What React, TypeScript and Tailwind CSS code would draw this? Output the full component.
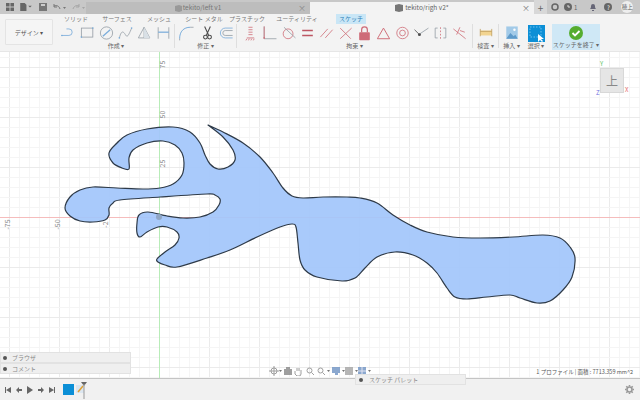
import React from "react";

const FONT = "font-['Noto_Sans_CJK_JP','Noto_Sans',sans-serif]";

// outline of the sketch profile, tip first
const PROFILE: [number, number][] = [
  [208, 125], [223, 132], [243, 143], [260, 157], [273, 173], [283, 188], [292, 196], [303, 198],
  [323, 197], [347, 197], [360, 198], [377, 203], [393, 215], [410, 225], [427, 232], [453, 237],
  [480, 238], [513, 237], [543, 235], [560, 238], [570, 247], [575, 258], [572, 277], [563, 290],
  [550, 301], [537, 303], [520, 298], [510, 295], [487, 297], [467, 299], [455, 297], [447, 288],
  [437, 273], [427, 263], [413, 255], [395, 252], [377, 257], [365, 268], [355, 278], [342, 281],
  [317, 277], [305, 270], [300, 260], [298, 243], [296, 227], [292, 224], [280, 227], [257, 237],
  [230, 250], [207, 258], [177, 267], [165, 265], [158, 262], [157, 259], [165, 252], [175, 245],
  [179, 238], [177, 232], [167, 227], [158, 227], [147, 232], [140, 237], [137, 233], [137, 223],
  [139, 215], [148, 212], [167, 216], [183, 218], [200, 217], [213, 212], [219, 205], [220, 199],
  [215, 195], [207, 194], [160, 197], [120, 200], [113, 203], [109, 208], [109, 215], [105, 220],
  [93, 222], [80, 221], [70, 216], [65, 208], [70, 197], [80, 190], [93, 187], [117, 188],
  [143, 189], [160, 188], [173, 184], [182, 175], [184, 163], [182, 153], [175, 145], [163, 141],
  [147, 143], [133, 150], [129, 158], [129, 169], [122, 168], [113, 163], [109, 153], [117, 143],
  [127, 135], [147, 129], [173, 127], [190, 132], [200, 143], [205, 155], [210, 164], [218, 169],
  [228, 167], [235, 160], [233, 150], [223, 137], [208, 125],
];

function splinePath(pts: [number, number][]) {
  let d = `M${pts[0][0]} ${pts[0][1]}`;
  for (let i = 0; i < pts.length - 1; i++) {
    const p0 = pts[Math.max(i - 1, 0)];
    const p1 = pts[i];
    const p2 = pts[i + 1];
    const p3 = pts[Math.min(i + 2, pts.length - 1)];
    const c1x = p1[0] + (p2[0] - p0[0]) / 6;
    const c1y = p1[1] + (p2[1] - p0[1]) / 6;
    const c2x = p2[0] - (p3[0] - p1[0]) / 6;
    const c2y = p2[1] - (p3[1] - p1[1]) / 6;
    d += `C${c1x} ${c1y} ${c2x} ${c2y} ${p2[0]} ${p2[1]}`;
  }
  return d + "Z";
}

function Grid() {
  const xs: number[] = [];
  const ys: number[] = [];
  for (let x = 159 % 10; x < 640; x += 10) xs.push(x);
  for (let y = 217 % 10; y < 400; y += 10) ys.push(y);
  return (
    <svg className="absolute inset-0" width="640" height="326" viewBox="0 52 640 326">
      {xs.map((x) => (
        <line key={x} x1={x + 0.5} x2={x + 0.5} y1="52" y2="378" stroke={(x - 159) % 50 === 0 ? "#ebebeb" : "#f5f5f5"} />
      ))}
      {ys.map((y) => (
        <line key={y} x1="0" x2="640" y1={y + 0.5} y2={y + 0.5} stroke={(y - 217) % 50 === 0 ? "#ebebeb" : "#f5f5f5"} />
      ))}
      <line x1="0" x2="640" y1="217.5" y2="217.5" stroke="#f5bcbc" />
      <line x1="159.5" x2="159.5" y1="52" y2="378" stroke="#b8ecb8" />
      <path d={splinePath(PROFILE)} fill="#a3c6fb" fillOpacity="0.93" stroke="#2e3a48" strokeWidth="1.2" strokeLinejoin="round" />
      <circle cx="159" cy="217" r="3" fill="#8fa6c4" />
    </svg>
  );
}

function Icon({ children, w = 19 }: { children: React.ReactNode; w?: number }) {
  return (
    <svg width={w} height="18" viewBox={`-1 -1 ${w + 2} 22`} fill="none" strokeWidth="1" className="shrink-0 opacity-80">
      {children}
    </svg>
  );
}

const B = "#5b9bd5";
const R = "#c8505c";
const G = "#808a94";

function ToolGroup({ label, children, w }: { label: string; children: React.ReactNode; w: string }) {
  return (
    <div className={`flex flex-col items-center shrink-0 ${w}`}>
      <div className="flex h-[18px] items-center">{children}</div>
      <div className="text-[6px] leading-[8px] text-[#666]">{label} ▾</div>
    </div>
  );
}

function Divider() {
  return <div className="w-px h-[24px] bg-[#dedede] shrink-0" />;
}

function Tab({ label, active, w }: { label: string; active?: boolean; w: string }) {
  return (
    <div className={`flex items-center justify-center text-[6px] leading-[10px] h-[10px] shrink-0 ${w} ${active ? "bg-[#c9e6f6] text-[#2b7fb8]" : "text-[#777]"}`}>
      {label}
    </div>
  );
}

function PanelRow({ label, className }: { label: string; className?: string }) {
  return (
    <div className={`flex items-center gap-[5px] pl-[1px] bg-[#efefef] border border-[#e2e2e2] ${className}`}>
      <span className="w-[4px] h-[4px] rounded-full bg-[#555] ml-[1px]" />
      <span className="text-[6px] text-[#888]">{label}</span>
    </div>
  );
}

export default function App() {
  return (
    <div className={`flex flex-col w-[640px] h-[400px] overflow-hidden bg-white ${FONT}`}>
      {/* Tab bar */}
      <div className="flex h-[14px] shrink-0 bg-[#c8c8c8]">
        <div className="flex items-center w-[86px] shrink-0 gap-[6px] pl-[6px] text-[#555]">
          <svg width="8" height="8" viewBox="0 0 9 9" fill="#666"><path d="M0 0h4v4H0zM5 0h4v4H5zM0 5h4v4H0zM5 5h4v4H5z" /></svg>
          <svg width="12" height="8" viewBox="0 0 13 9" fill="#666"><path d="M0 0h5l2 2v7H0zM9 3h4l-2 2z" /></svg>
          <svg width="8" height="8" viewBox="0 0 8 8" fill="#777" className="ml-px"><path d="M0 0h8v8H0z" /><path d="M2 1h4v2H2z" fill="#ccc" /></svg>
          <svg width="13" height="9" viewBox="0 0 13 9" fill="none" stroke="#777"><path d="M7 6C6 3 4 2 1 3M1 1v3h3" /><path d="M10 4h3l-1.5 2z" fill="#777" stroke="none" /></svg>
          <svg width="13" height="9" viewBox="0 0 13 9" fill="none" stroke="#a5a5a5"><path d="M1 6c1-3 3-4 6-3M7 1v3H4" /><path d="M10 4h3l-1.5 2z" fill="#a5a5a5" stroke="none" /></svg>
        </div>
        <div className="flex items-center justify-center relative w-[224px] shrink-0 mt-[2px] bg-[#bdbdbd] text-[6.5px] text-[#777]">
          <svg width="7" height="7" viewBox="0 0 7 7" className="mr-[1px]"><path d="M0 1l4-1 3 1v5l-3 1-4-1z" fill="#999" /></svg>
          tekito/left v1
          <span className="absolute right-[4px] text-[8px] text-[#888]">×</span>
        </div>
        <div className="flex items-center justify-center relative w-[224px] shrink-0 mt-[2px] bg-[#f3f3f3] text-[6.5px] text-[#666]">
          <svg width="8" height="8" viewBox="0 0 8 8" className="mr-[2px]"><path d="M0 1l4-1 4 1v6l-4 1-4-1z" fill="#777" /></svg>
          tekito/righ v2*
          <span className="absolute right-[4px] text-[8px] text-[#777]">×</span>
        </div>
        <div className="flex items-center flex-1 text-[#666]">
          <div className="flex items-center justify-center w-[13px] h-[14px] bg-[#d8d8d8] text-[10px]">+</div>
          <svg width="8" height="8" viewBox="0 0 8 8" className="ml-[4px]" fill="none" stroke="#666" strokeWidth="1.5"><circle cx="4" cy="4" r="3" /></svg>
          <svg width="8" height="8" viewBox="0 0 8 8" className="ml-[5px]"><circle cx="4" cy="4" r="4" fill="#666" /><path d="M4 2v2h2" stroke="#ddd" fill="none" /></svg>
          <span className="text-[6px] ml-[2px]">1</span>
          <svg width="8" height="8" viewBox="0 0 8 8" className="ml-[12px]"><path d="M1 6c1-1 1-2 1-3a2 2 0 014 0c0 1 0 2 1 3zM3 7h2v1H3z" fill="#667" /></svg>
          <div className="flex items-center justify-center w-[8px] h-[8px] rounded-full bg-[#666] text-[6px] text-white ml-[7px]">?</div>
          <div className="flex items-center justify-center w-[12px] h-[12px] rounded-full bg-[#eeeeee] text-[5.5px] ml-[9px]">穂上</div>
        </div>
      </div>

      {/* Toolbar */}
      <div className="flex h-[38px] shrink-0 bg-[#f3f3f3] border-b border-[#e6e6e6]">
        <div className="flex items-center justify-center w-[48px] h-[26px] ml-[5px] mt-[5px] shrink-0 bg-[#f5f5f5] border border-[#e4e4e4] rounded-[1px] text-[6px] text-[#555]">
          デザイン ▾
        </div>
        <div className="flex flex-col ml-[5px] min-w-0">
          <div className="flex h-[10px]">
            <Tab label="ソリッド" w="w-[30px] ml-[3px]" />
            <Tab label="サーフェス" w="w-[34px] ml-[9px]" />
            <Tab label="メッシュ" w="w-[30px] ml-[10px]" />
            <Tab label="シート メタル" w="w-[40px] ml-[10px]" />
            <Tab label="プラスチック" w="w-[40px] ml-[3px]" />
            <Tab label="ユーティリティ" w="w-[44px] ml-[8px]" />
            <Tab label="スケッチ" w="w-[30px] ml-[17px]" active />
          </div>
          <div className="flex items-start">
            <ToolGroup label="作成" w="w-[116px]">
              <Icon><path d="M1 13h9a4 4 0 000-8H7" stroke={B} /><circle cx="1.5" cy="13" r="1" fill={B} /></Icon>
              <Icon><rect x="2" y="4" width="14" height="11" stroke={G} /><circle cx="2" cy="15" r="1" fill={B} /><circle cx="16" cy="4" r="1" fill={B} /></Icon>
              <Icon><circle cx="9.5" cy="10" r="7.5" stroke={G} /><path d="M5 14L14 6" stroke={B} strokeWidth="1.5" /></Icon>
              <Icon><path d="M2 16c3-12 6-6 8-3s4-2 7-9" stroke={G} /><circle cx="2" cy="16" r="1" fill={B} /><circle cx="17" cy="4" r="1" fill={B} /></Icon>
              <Icon><path d="M9 3L2 16h14zM9 3v13" stroke={G} /><path d="M9 3v13h7z" fill="#d3dce4" /></Icon>
              <Icon><path d="M3 3v14M16 3v14" stroke={G} /><path d="M3 9h13" stroke={B} strokeWidth="1.5" /></Icon>
            </ToolGroup>
            <Divider />
            <ToolGroup label="修正" w="w-[61px]">
              <Icon w={22}><path d="M2 17C2 8 7 3 15 3" stroke={B} strokeWidth="1.2" /><path d="M2 17v2M15 3h4" stroke={G} /></Icon>
              <Icon><path d="M6 2l5 11M13 2L8 13" stroke="#222" strokeWidth="1.3" /><circle cx="7" cy="15" r="2.3" stroke="#222" strokeWidth="1.3" /><circle cx="12" cy="15" r="2.3" stroke="#222" strokeWidth="1.3" /></Icon>
              <Icon><path d="M17 4H8a5.5 5.5 0 000 12h9" stroke={B} /><path d="M17 7H8a2.5 2.5 0 000 6h9" stroke={G} /></Icon>
            </ToolGroup>
            <Divider />
            <ToolGroup label="拘束" w="w-[235px]">
              <Icon><path d="M7 3h5M7 6h5M7 9h5M7 12h5M5 16h9" stroke={R} /><path d="M5 17l-1 2M8 17l-1 2M11 17l-1 2M14 17l-1 2" stroke={R} /></Icon>
              <Icon><path d="M3 2v15h15" stroke={G} /><path d="M3 2v15" stroke={R} /><circle cx="3" cy="16" r="1" fill={R} /></Icon>
              <Icon><circle cx="9" cy="11" r="6" stroke={R} /><path d="M4 3l14 13" stroke={G} /></Icon>
              <Icon><path d="M3 7h13M3 13h13" stroke="#b03040" strokeWidth="2" /></Icon>
              <Icon><path d="M2 15L11 5M8 16L17 6" stroke={R} /></Icon>
              <Icon><path d="M3 4l13 13M17 4L3 17" stroke={R} /></Icon>
              <Icon><rect x="3" y="9" width="13" height="10" rx="1" fill="#c64a5a" /><path d="M6 9V6a3.5 3.5 0 017 0v3" stroke="#c64a5a" strokeWidth="1.5" /></Icon>
              <Icon><path d="M9.5 4L2 17h15z" stroke={R} strokeWidth="1.2" /></Icon>
              <Icon><circle cx="9.5" cy="10" r="7" stroke={R} /><circle cx="9.5" cy="10" r="3.5" stroke={R} /></Icon>
              <Icon><path d="M6 12L18 4" stroke={G} /><path d="M1 6l6 6" stroke="#222" /><circle cx="7" cy="12" r="1.8" fill="#222" /></Icon>
              <Icon><path d="M9.5 3v14" stroke={R} strokeDasharray="2 2" /><path d="M6 4H3v12h3M13 4h3v12h-3" stroke={G} /></Icon>
              <Icon><path d="M2 5l15 12M10 3l-4 9M10 7l6 2" stroke={R} /></Icon>
            </ToolGroup>
            <Divider />
            <ToolGroup label="検査" w="w-[25px]">
              <Icon w={18}>
                <rect x="2" y="7" width="14" height="6" fill="#f2cd78" />
                <path d="M2 5v9M16 5v9M2 8h14" stroke="#b58a3a" />
              </Icon>
            </ToolGroup>
            <Divider />
            <ToolGroup label="挿入" w="w-[25px]">
              <Icon w={16}>
                <rect x="1" y="2" width="14" height="15" fill="#8fc1e6" />
                <path d="M1 17l5-7 4 4 2-2 3 5z" fill="#3a85c0" />
                <circle cx="11" cy="6" r="1.5" fill="#fff" />
              </Icon>
            </ToolGroup>
            <ToolGroup label="選択" w="w-[24px]">
              <svg width="17" height="17" viewBox="0 0 17 17" className="shrink-0">
                <rect width="17" height="17" fill="#0c8fd6" />
                <rect x="2" y="2" width="11" height="10" fill="none" stroke="#6cc0ee" strokeDasharray="1.5 1.5" />
                <path d="M10 9v8l2-2 2 2 1-1-2-2h3z" fill="#fff" />
              </svg>
            </ToolGroup>
            <div className="flex flex-col items-center w-[48px] h-[26px] shrink-0 ml-[4px] bg-[#cfe8f6]">
              <svg width="14" height="14" viewBox="0 0 14 14" className="mt-[2px] shrink-0">
                <circle cx="7" cy="7" r="7" fill="#55ad30" />
                <path d="M3.5 7l2.5 2.5 4.5-4.5" stroke="#fff" strokeWidth="1.8" fill="none" />
              </svg>
              <div className="text-[6px] leading-[8px] mt-[1px] text-[#666] whitespace-nowrap">スケッチを終了 ▾</div>
            </div>
          </div>
        </div>
      </div>

      {/* Canvas */}
      <div className="relative flex-1 min-h-0 bg-white">
        <Grid />
        <span className="absolute left-[2px] top-[169px] text-[7px] leading-none text-[#888] -rotate-90">-75</span>
        <span className="absolute left-[52px] top-[169px] text-[7px] leading-none text-[#888] -rotate-90">-50</span>
        <span className="absolute left-[102px] top-[169px] text-[7px] leading-none text-[#888] -rotate-90">-2</span>
        <span className="absolute left-[159px] top-[9px] text-[7px] leading-none text-[#888] -rotate-90">75</span>
        <span className="absolute left-[159px] top-[59px] text-[7px] leading-none text-[#888] -rotate-90">50</span>
        <span className="absolute left-[159px] top-[108px] text-[7px] leading-none text-[#888] -rotate-90">25</span>

        {/* View cube */}
        <div className="absolute left-[600px] top-[16px] flex items-center justify-center w-[24px] h-[25px] bg-[#e6e6e6] border border-[#d8d8d8] text-[12px] leading-none text-[#888]">
          上
        </div>
        <span className="absolute left-[600px] top-[9px] text-[6px] leading-none text-[#55c060]">Y</span>
        <span className="absolute left-[625px] top-[35px] text-[6px] leading-none text-[#e87070]">X</span>
        <span className="absolute left-[596px] top-[38px] text-[6px] leading-none text-[#6a6ae0]">Z</span>

        {/* Browser / comment panels */}
        <div className="absolute left-0 top-[300px] flex flex-col w-[131px]">
          <PanelRow label="ブラウザ" className="h-[11px]" />
          <PanelRow label="コメント" className="h-[11px]" />
        </div>

        {/* Nav bar */}
        <div className="absolute left-[269px] top-[314px] flex items-center opacity-80">
          <svg width="14" height="10" viewBox="0 0 14 10" fill="none" stroke="#888"><circle cx="5" cy="5" r="3" /><path d="M5 0v10M0 5h10" /><path d="M10 4h3l-1.5 2z" fill="#555" stroke="none" /></svg>
          <svg width="8" height="8" viewBox="0 0 8 8" className="ml-[1px]"><rect y="2" width="8" height="6" fill="#888" /><rect x="2" width="4" height="2" fill="#888" /></svg>
          <svg width="8" height="9" viewBox="0 0 8 9" fill="none" stroke="#888" className="ml-[2px]"><path d="M1 4v3l2 2h3l1-2V3M3 4V1M5 4V1" /></svg>
          <svg width="8" height="8" viewBox="0 0 8 8" fill="none" stroke="#888" className="ml-[4px]"><circle cx="3.5" cy="3.5" r="2.5" /><path d="M5.5 5.5L8 8" /></svg>
          <svg width="13" height="8" viewBox="0 0 13 8" fill="none" stroke="#888" className="ml-[3px]"><circle cx="3.5" cy="3.5" r="2.5" /><path d="M5.5 5.5L8 8" /><path d="M10 3h3l-1.5 2z" fill="#555" stroke="none" /></svg>
          <svg width="13" height="8" viewBox="0 0 13 8" className="ml-[2px]"><rect width="8" height="6" fill="#6f93c4" /><rect x="3" y="6" width="3" height="2" fill="#6f93c4" /><path d="M10 3h3l-1.5 2z" fill="#555" /></svg>
          <svg width="13" height="8" viewBox="0 0 13 8"><rect width="8" height="8" fill="#a5a5a5" /><path d="M10 3h3l-1.5 2z" fill="#555" /></svg>
          <svg width="13" height="8" viewBox="0 0 13 8"><path d="M0 0h8v8H0z" fill="#6f93c4" /><path d="M0 4h8M4 0v8" stroke="#dde" /><path d="M10 3h3l-1.5 2z" fill="#555" /></svg>
        </div>

        {/* Status */}
        <div className="absolute right-[7px] top-[316px] text-[5.5px] leading-[8px] text-[#555] whitespace-nowrap">
          1 プロファイル | 面積 : 7713.359 mm^2
        </div>

        {/* Sketch palette, hangs over the timeline */}
        <div className="absolute left-[355px] top-[322px] flex items-center gap-[6px] w-[111px] h-[11px] pl-[3px] bg-[#efefef] border border-[#e2e2e2] z-10">
          <span className="w-[4px] h-[4px] rounded-full bg-[#555]" />
          <span className="text-[6px] text-[#888]">スケッチ パレット</span>
        </div>
      </div>

      {/* Timeline */}
      <div className="flex items-center h-[22px] shrink-0 bg-[#f1f1f1] border-t border-[#c4c4c4]">
        <svg width="50" height="8" viewBox="0 0 50 8" fill="#666" className="ml-[5px] shrink-0">
          <path d="M0 1h1v6H0zM1 4l5-3v6z" />
          <path d="M11 4l3-3v6zM14 3h3v2h-3z" />
          <path d="M22 0l6 4-6 4z" />
          <path d="M33 3h3V1l3 3-3 3V5h-3z" />
          <path d="M44 1l5 3-5 3zM49 1h1v6h-1z" />
        </svg>
        <div className="w-[11px] h-[11px] ml-[8px] bg-[#0c8fd6] shrink-0" />
        <svg width="14" height="18" viewBox="0 0 14 18" className="ml-px shrink-0">
          <rect x="1" y="4" width="8" height="8" fill="#dce6f0" />
          <path d="M3 11l5-6" stroke="#e0a030" strokeWidth="1.5" />
          <path d="M6 1h6l-3 4z" fill="#666" />
          <path d="M9 3v15" stroke="#999" />
        </svg>
        <svg width="9" height="9" viewBox="0 0 9 9" className="ml-auto mr-[6px]" fill="none" stroke="#999" strokeWidth="1.6">
          <circle cx="4.5" cy="4.5" r="2.5" />
          <path d="M4.5 0v1.5M4.5 7.5V9M0 4.5h1.5M7.5 4.5H9M1.3 1.3l1 1M6.7 6.7l1 1M7.7 1.3l-1 1M2.3 6.7l-1 1" />
        </svg>
      </div>
    </div>
  );
}
